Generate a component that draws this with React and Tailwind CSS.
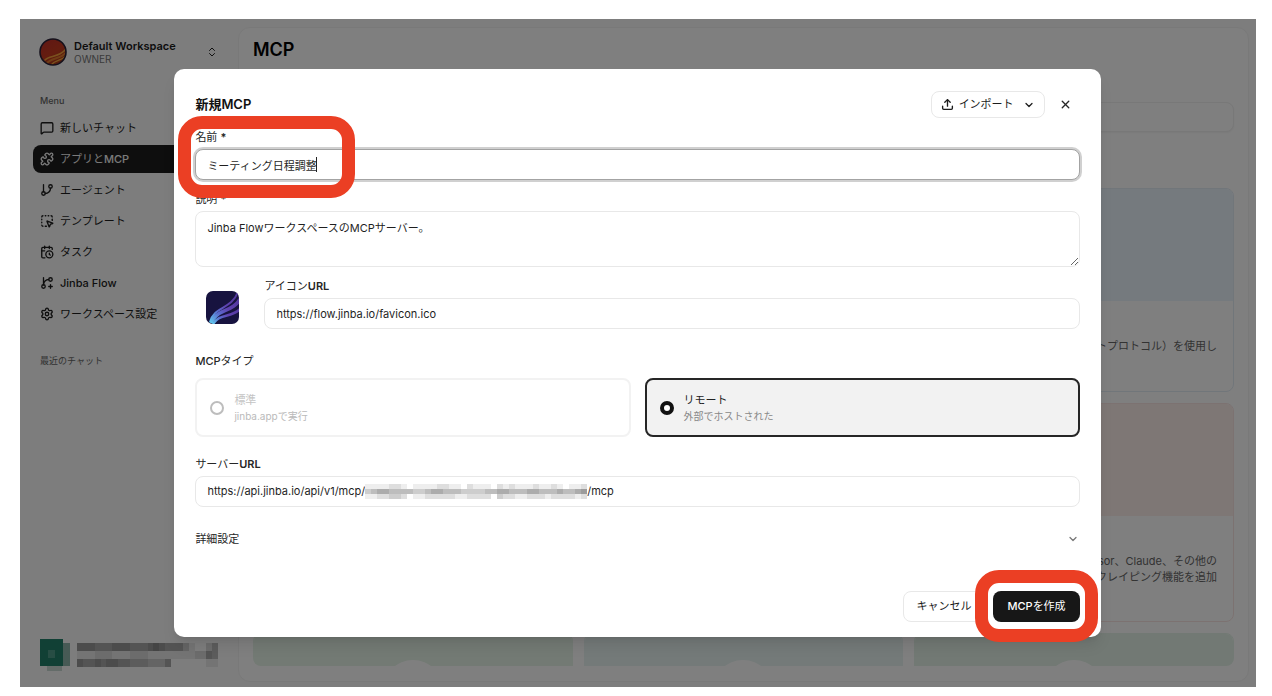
import {
  CalendarClock,
  ChevronDown,
  ChevronsUpDown,
  GitBranch,
  GitBranchPlus,
  MessageSquare,
  Puzzle,
  Settings,
  SquareDashedMousePointer,
  Upload,
  X,
} from "lucide-react";

const menu = [
  { label: "新しいチャット", icon: MessageSquare },
  { label: "アプリと", latin: "MCP", icon: Puzzle, active: true },
  { label: "エージェント", icon: GitBranch },
  { label: "テンプレート", icon: SquareDashedMousePointer },
  { label: "タスク", icon: CalendarClock },
  { latin: "Jinba Flow", icon: GitBranchPlus },
  { label: "ワークスペース設定", icon: Settings },
];

const cards = [
  { tint: "bg-[#eaf4fd]", border: "border-[#e2ecf5]", body: "h-[90px]" },
  { tint: "bg-[#eaf4fd]", border: "border-[#e2ecf5]", body: "h-[90px]" },
  {
    tint: "bg-[#eaf4fd]",
    border: "border-[#e2ecf5]",
    body: "h-[90px]",
    lines: ["トプロトコル）を使用し"],
  },
  { tint: "bg-[#fdeeea]", border: "border-[#f8e4e2]", body: "h-[105px]" },
  { tint: "bg-[#fdeeea]", border: "border-[#f8e4e2]", body: "h-[105px]" },
  {
    tint: "bg-[#fdeeea]",
    border: "border-[#f8e4e2]",
    body: "h-[105px]",
    lines: ["sor、Claude、その他の", "クレイピング機能を追加"],
  },
  { tint: "bg-[#e6f4e8]", border: "border-[#e6f4e8]", body: "h-[90px]", badge: true },
  { tint: "bg-[#e9f5f3]", border: "border-[#e9f5f3]", body: "h-[90px]", badge: true },
  { tint: "bg-[#e4f3e8]", border: "border-[#e4f3e8]", body: "h-[90px]", badge: true },
];

const inputClass =
  "h-[31px] w-full rounded-lg border border-[#e8e8e8] bg-white px-[11px] text-[11px] text-[#1f1f1f] outline-none";
const labelClass = "text-[11px] leading-4 text-[#262626]";

// one digit per cell, 0 is clear and 9 is the darkest
const urlMosaic = [
  "1111221011112211021110212111211210112",
  "3455444433455444333344554445544454456",
  "1122332011222221122220322112221222212",
];
const userMosaic = [
  "666555666555676555310024",
  "111222111222111111112254",
  "655656655444333500000011",
];

function Mosaic({ rows, cellW, cellH, className }) {
  return (
    <svg
      className={className}
      viewBox={`0 0 ${rows[0].length * cellW} ${rows.length * cellH}`}
      preserveAspectRatio="none"
      shapeRendering="crispEdges"
      aria-hidden="true"
    >
      {rows.map((row, y) =>
        [...row].map((n, x) => (
          <rect
            key={`${x}-${y}`}
            x={x * cellW}
            y={y * cellH}
            width={cellW}
            height={cellH}
            fill="#000"
            opacity={Number(n) * 0.065}
          />
        ))
      )}
    </svg>
  );
}

function WorkspaceLogo() {
  return (
    <svg className="size-7 shrink-0" viewBox="0 0 28 28" aria-hidden="true">
      <defs>
        <linearGradient id="ws" x1="0.2" y1="0" x2="0.8" y2="1">
          <stop offset="0" stopColor="#c23028" />
          <stop offset="0.5" stopColor="#c93a20" />
          <stop offset="1" stopColor="#a83a1a" />
        </linearGradient>
        <clipPath id="wsClip">
          <circle cx="14" cy="14" r="13" />
        </clipPath>
      </defs>
      <circle cx="14" cy="14" r="13" fill="url(#ws)" />
      <g clipPath="url(#wsClip)" fill="none" strokeLinecap="round">
        <path d="M6 22c4-5 14-2 21-11" stroke="#f5a23c" strokeWidth="1.6" />
        <path d="M8 25c5-6 13-3 20-11" stroke="#e07a2c" strokeWidth="2.2" />
        <path d="M12 27c4-5 10-4 15-9" stroke="#f5a83c" strokeWidth="1.4" />
      </g>
      <circle cx="14" cy="14" r="13" fill="none" stroke="#2a2238" strokeWidth="1.6" />
    </svg>
  );
}

function FlowLogo() {
  return (
    <svg className="size-[33px]" viewBox="0 0 33 33" aria-hidden="true">
      <defs>
        <linearGradient id="flow" x1="0" y1="1" x2="1" y2="0">
          <stop offset="0" stopColor="#62c8ee" />
          <stop offset="0.3" stopColor="#5a6fd0" />
          <stop offset="0.55" stopColor="#5f42b0" />
          <stop offset="1" stopColor="#50359a" />
        </linearGradient>
        <clipPath id="flowClip">
          <rect width="33" height="33" rx="7" />
        </clipPath>
      </defs>
      <rect width="33" height="33" rx="7" fill="#17133f" />
      <g clipPath="url(#flowClip)" fill="none" stroke="url(#flow)">
        <path d="M4 31C8 15 25 19 32 1" strokeWidth="2" />
        <path d="M5 32C10 18 26 22 35 7" strokeWidth="3.6" />
        <path d="M7 33C13 22 27 27 35 17" strokeWidth="2.6" />
      </g>
    </svg>
  );
}

function Sidebar() {
  return (
    <aside className="flex w-[218px] shrink-0 flex-col px-[13px] pt-[19px] pb-4">
      <button type="button" className="flex items-center gap-[7px] pr-[7px] pl-1.5 text-left">
        <WorkspaceLogo />
        <span className="flex flex-1 flex-col">
          <span className="text-[11px] leading-[14px] font-semibold text-[#1a1a1a]">
            Default Workspace
          </span>
          <span className="text-[10px] leading-3 text-[#777]">OWNER</span>
        </span>
        <ChevronsUpDown className="size-3 text-[#222]" />
      </button>

      <h2 className="mt-[27px] pl-[7px] text-[9px] leading-4 font-medium text-[#666]">Menu</h2>
      <nav className="mt-[5px] flex flex-col gap-[3px]">
        {menu.map(({ label, latin, icon: Icon, active }) => (
          <a
            key={label ?? latin}
            href="#"
            className={
              active
                ? "flex h-7 items-center gap-1.5 rounded-lg bg-[#1c1c1c] px-[7px] text-[11px] text-[#f5f5f5]"
                : "flex h-7 items-center gap-1.5 rounded-lg px-[7px] text-[11px] text-[#1c1c1c]"
            }
          >
            <Icon className="size-[14px]" strokeWidth={2.25} />
            <span>
              {label}
              {latin && <span className="font-medium">{latin}</span>}
            </span>
          </a>
        ))}
      </nav>
      <h2 className="mt-[25px] pl-[7px] text-[9px] leading-4 text-[#666]">最近のチャット</h2>

      <div className="mt-auto flex items-center gap-[7px] pl-[7px]">
        <svg className="h-[33px] w-[30px]" viewBox="0 0 30 33" shapeRendering="crispEdges" aria-hidden="true">
          <rect y="1" width="23" height="27" fill="#23806a" />
          <rect x="8" y="12" width="7" height="8" fill="#4f9a88" />
          <rect x="23" y="5" width="7" height="23" fill="#8fb5ab" />
          <rect x="7" y="28" width="15" height="5" fill="#c8d8d3" />
        </svg>
        <Mosaic rows={userMosaic} cellW={6} cellH={8} className="h-6 w-[141px]" />
      </div>
    </aside>
  );
}

function MainPanel() {
  return (
    <main className="mt-2 mr-[7px] mb-[5px] flex min-w-0 flex-1 flex-col rounded-xl border border-[#f3f3f3] bg-white px-[14px] pb-[15px]">
      <h1 className="flex h-11 shrink-0 items-center text-lg font-semibold text-black">MCP</h1>
      <input
        type="search"
        aria-label="検索"
        className="mt-[30px] h-[30px] w-full shrink-0 rounded-lg border border-[#f0f0f0] bg-white px-3 text-[11px] shadow-xs"
      />
      <div className="mt-14 grid min-h-0 flex-1 auto-rows-max grid-cols-3 gap-[11px] overflow-hidden rounded-b-lg">
        {cards.map((card, i) => (
          <article key={i} className={`overflow-hidden rounded-lg border ${card.border}`}>
            <div className={`flex h-28 items-center justify-center ${card.tint}`}>
              {card.badge && <span className="size-[60px] rounded-full bg-white" />}
            </div>
            <div className={`px-4 pt-[37px] text-right text-[11px] leading-4 text-[#666] ${card.body}`}>
              {card.lines?.map((line) => (
                <p key={line}>{line}</p>
              ))}
            </div>
          </article>
        ))}
      </div>
    </main>
  );
}

function TypeOption({ id, title, note, selected }) {
  return (
    <label
      htmlFor={id}
      className={
        selected
          ? "flex h-[59px] items-center gap-2.5 rounded-lg border-2 border-[#262626] bg-[#f2f2f2] px-[13px]"
          : "flex h-[59px] items-center gap-2.5 rounded-lg border-2 border-[#f2f2f2] bg-white px-[13px]"
      }
    >
      <input
        id={id}
        type="radio"
        name="mcp-type"
        defaultChecked={selected}
        disabled={!selected}
        className="size-[14px] shrink-0 appearance-none rounded-full border-2 border-[#bdbdbd] bg-white checked:border-4 checked:border-[#111]"
      />
      <span className="flex flex-col leading-4">
        <span className={selected ? "text-[11px] text-[#222]" : "text-[11px] text-[#c4c4c4]"}>
          {title}
        </span>
        <span className={selected ? "text-[10px] text-[#888]" : "text-[10px] text-[#bababa]"}>
          {note}
        </span>
      </span>
    </label>
  );
}

function NewMcpDialog() {
  return (
    <form
      role="dialog"
      aria-labelledby="dialog-title"
      className="flex w-3/4 flex-col rounded-[10px] bg-white px-[21px] pt-[22px] pb-[15px] shadow-lg"
    >
      <header className="flex h-[27px] items-center">
        <h2 id="dialog-title" className="flex-1 text-[13px] font-semibold text-[#111]">
          新規MCP
        </h2>
        <button
          type="button"
          className="flex h-[27px] items-center gap-[5px] rounded-lg border border-[#e8e8e8] px-[9px] text-[11px] text-[#1c1c1c]"
        >
          <Upload className="size-[13px]" strokeWidth={2.5} />
          インポート
          <ChevronDown className="ml-1 size-3" strokeWidth={2.5} />
        </button>
        <button type="button" aria-label="閉じる" className="ml-[14px] pr-2 text-[#262626]">
          <X className="size-[13px]" strokeWidth={2.5} />
        </button>
      </header>

      <div className="mt-[11px] flex flex-col gap-[11px]">
        <div className="relative flex flex-col gap-1">
          <label htmlFor="name" className={labelClass}>
            名前 <span className="font-semibold">*</span>
          </label>
          <div className="relative flex">
            <input
              id="name"
              defaultValue="ミーティング日程調整"
              className="h-[31px] w-full rounded-lg border border-[#a3a3a3] bg-white px-[11px] text-[11px] text-[#1f1f1f] ring-2 ring-[#d0d0d0] outline-none"
            />
            <span className="absolute inset-y-2 left-[121px] w-px bg-[#222]" />
          </div>
          <span className="pointer-events-none absolute -top-[13px] -left-[17px] z-10 h-[82px] w-[177px] rounded-[24px] border-[13px] border-[#eb3f24]" />
        </div>

        <div className="flex flex-col gap-1">
          <label htmlFor="description" className={labelClass}>
            説明 <span className="font-semibold">*</span>
          </label>
          <textarea
            id="description"
            defaultValue="Jinba FlowワークスペースのMCPサーバー。"
            className="h-14 w-full rounded-lg border border-[#e8e8e8] bg-white px-[11px] py-2 text-[11px] leading-4 text-[#1f1f1f] outline-none"
          />
        </div>

        <div className="flex items-start gap-[14px]">
          <div className="flex h-[59px] w-[55px] shrink-0 items-center justify-center">
            <FlowLogo />
          </div>
          <div className="flex flex-1 flex-col gap-1">
            <label htmlFor="icon-url" className={labelClass}>
              アイコン<span className="font-semibold">URL</span>
            </label>
            <input
              id="icon-url"
              defaultValue="https://flow.jinba.io/favicon.ico"
              className={inputClass}
            />
          </div>
        </div>
      </div>

      <fieldset className="mt-4">
        <legend className={labelClass}>
          <span className="font-medium">MCP</span>タイプ
        </legend>
        <div className="mt-[9px] grid grid-cols-2 gap-[14px]">
          <TypeOption id="type-standard" title="標準" note="jinba.appで実行" />
          <TypeOption id="type-remote" title="リモート" note="外部でホストされた" selected />
        </div>
      </fieldset>

      <div className="mt-[19px] flex flex-col gap-1">
        <label htmlFor="server-url" className={labelClass}>
          サーバー<span className="font-semibold">URL</span>
        </label>
        <div className="flex h-[31px] items-center rounded-lg border border-[#e8e8e8] px-[11px] text-[11px] text-[#1f1f1f]">
          <input
            id="server-url"
            defaultValue="https://api.jinba.io/api/v1/mcp/"
            className="field-sizing-content outline-none"
          />
          <Mosaic rows={urlMosaic} cellW={6} cellH={5} className="h-[15px] w-[222px]" />
          <input
            aria-label="サーバーURLの末尾"
            defaultValue="/mcp"
            className="field-sizing-content outline-none"
          />
        </div>
      </div>

      <button
        type="button"
        className="mt-6 flex items-center justify-between pr-px text-[11px] leading-4 text-[#262626]"
      >
        詳細設定
        <ChevronDown className="size-3 text-[#777]" strokeWidth={2.5} />
      </button>

      <footer className="mt-11 flex justify-end gap-[9px]">
        <button
          type="button"
          className="h-[31px] rounded-lg border border-[#e8e8e8] px-3 text-[11px] text-[#1c1c1c]"
        >
          キャンセル
        </button>
        <div className="relative flex">
          <button
            type="submit"
            className="h-[31px] rounded-lg bg-[#171717] px-[14px] text-[11px] text-white"
          >
            <span className="font-medium">MCP</span>を作成
          </button>
          <span className="pointer-events-none absolute -inset-x-[18px] -top-[21px] -bottom-5 rounded-[24px] border-[13px] border-[#eb3f24]" />
        </div>
      </footer>
    </form>
  );
}

export default function App() {
  return (
    <div className="flex h-screen bg-white pt-[19px] pr-4 pb-[9px] pl-5 font-['Inter','Noto_Sans_CJK_JP',sans-serif]">
      <div className="relative flex min-w-0 flex-1 overflow-hidden bg-[#fafafa]">
        <Sidebar />
        <MainPanel />
        <div className="absolute inset-0 flex items-center justify-center bg-black/50 pr-px">
          <NewMcpDialog />
        </div>
      </div>
    </div>
  );
}
